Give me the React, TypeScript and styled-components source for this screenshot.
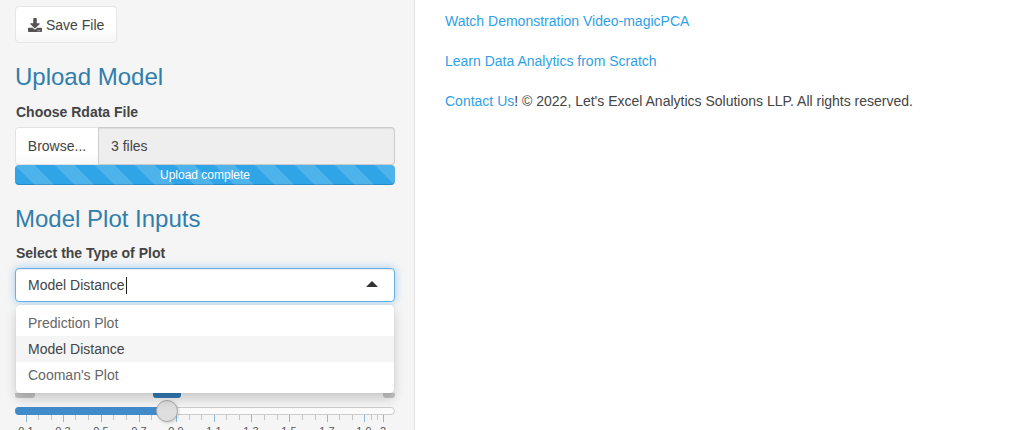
import styled, { createGlobalStyle } from 'styled-components';
import { FaDownload } from 'react-icons/fa';

const GlobalStyle = createGlobalStyle`
  html, body {
    margin: 0;
    height: 430px;
    overflow: hidden;
    background: #fff;
    font-family: "Liberation Sans", Arial, sans-serif;
    font-size: 14px;
    line-height: 20px;
    color: #444;
  }
  * { box-sizing: border-box; }
`;

const Page = styled.div`
  display: flex;
  height: 430px;
  overflow: hidden;
`;

const Sidebar = styled.aside`
  width: 415px;
  flex: none;
  padding: 6px 19px 0 15px;
  background: #f5f5f5;
  border-right: 1px solid #e3e3e3;
`;

const Main = styled.main`
  flex: 1;
  padding: 11px 30px 0;
`;

const Paragraph = styled.p`
  margin: 0 0 20px;
`;

const Link = styled.a`
  color: #2f9fe8;
  text-decoration: none;
`;

const SaveButton = styled.button`
  display: flex;
  align-items: center;
  gap: 4px;
  height: 37px;
  padding: 0 12px;
  font: inherit;
  color: #444;
  background: linear-gradient(to bottom, #fff 60%, #f6f6f6);
  border: 1px solid #e6e6e6;
  border-radius: 4px;
`;

const Heading = styled.h3<{ $bottom: number }>`
  margin: 21px 0 ${(p) => p.$bottom}px;
  font-size: 24px;
  font-weight: 400;
  line-height: 26px;
  color: #317eac;
`;

const Label = styled.label`
  display: block;
  margin-bottom: 5px;
  padding-left: 1px;
  font-weight: 700;
  color: #444;
`;

const FileRow = styled.div`
  display: flex;
  height: 38px;
`;

const BrowseButton = styled.span`
  width: 84px;
  display: flex;
  align-items: center;
  justify-content: center;
  background: linear-gradient(to bottom, #fff 70%, #f8f8f8);
  border: 1px solid #e3e3e3;
  border-right: 1px solid #ccc;
  border-radius: 4px 0 0 4px;
`;

const FileName = styled.span`
  flex: 1;
  display: flex;
  align-items: center;
  padding-left: 12px;
  background: #eee;
  border: 1px solid #ccc;
  border-left: 0;
  border-radius: 0 4px 4px 0;
  box-shadow: inset 0 1px 1px rgba(0, 0, 0, 0.075);
`;

const Progress = styled.div`
  height: 20px;
  font-size: 12px;
  line-height: 20px;
  text-align: center;
  color: #fff;
  border-radius: 4px;
  background-color: #2fa4e7;
  background-image: linear-gradient(
    45deg,
    rgba(255, 255, 255, 0.15) 25%,
    transparent 25%,
    transparent 50%,
    rgba(255, 255, 255, 0.15) 50%,
    rgba(255, 255, 255, 0.15) 75%,
    transparent 75%,
    transparent
  );
  background-size: 40px 40px;
  box-shadow: inset 0 -1px 0 rgba(0, 0, 0, 0.15);
`;

const SelectWrap = styled.div`
  position: relative;
`;

const SelectControl = styled.div`
  display: flex;
  align-items: center;
  justify-content: space-between;
  height: 34px;
  padding: 0 16px 0 12px;
  background: #fff;
  border: 1px solid #66afe9;
  border-radius: 4px;
  box-shadow: inset 0 1px 1px rgba(0, 0, 0, 0.075), 0 0 8px rgba(102, 175, 233, 0.6);
`;

const Caret = styled.span`
  width: 0;
  height: 0;
  margin-top: -2px;
  border-left: 6px solid transparent;
  border-right: 6px solid transparent;
  border-bottom: 6px solid #333;
`;

const TextCursor = styled.span`
  display: inline-block;
  width: 1px;
  height: 17px;
  margin-left: 1px;
  vertical-align: -4px;
  background: #222;
`;

const Dropdown = styled.div`
  position: absolute;
  z-index: 2;
  top: 37px;
  left: 1px;
  right: 1px;
  height: 88px;
  padding: 5px 0;
  background: #fff;
  border-radius: 4px;
  box-shadow: 0 6px 12px rgba(0, 0, 0, 0.175), 0 0 1px rgba(0, 0, 0, 0.2);
`;

const Option = styled.div<{ $active?: boolean }>`
  height: 26px;
  padding-left: 12px;
  line-height: 26px;
  color: ${(p) => (p.$active ? '#444' : '#666')};
  background: ${(p) => (p.$active ? '#f5f5f5' : 'transparent')};
`;

const SliderArea = styled.div`
  margin-top: 91px;
`;

const BadgeRow = styled.div`
  display: flex;
  height: 5px;
  margin-bottom: 9px;
`;

const Badge = styled.span<{ $gap: number; $width: number; $color: string }>`
  width: ${(p) => p.$width}px;
  margin-left: ${(p) => p.$gap}px;
  background: ${(p) => p.$color};
  border-radius: 0 0 3px 3px;
`;

const Track = styled.div`
  position: relative;
  height: 8px;
  background: #fbfbfb;
  border: 1px solid #ccc;
  border-radius: 4px;
`;

const Fill = styled.div`
  width: 152px;
  height: 8px;
  margin: -1px 0 0 -1px;
  background: #428bca;
  border-radius: 4px 0 0 4px;
`;

const Handle = styled.div`
  position: absolute;
  top: -8px;
  left: 140px;
  width: 22px;
  height: 22px;
  background: #dedede;
  border: 1px solid #aaa;
  border-radius: 50%;
  box-shadow: 1px 1px 3px rgba(0, 0, 0, 0.15);
`;

const Scale = styled.svg`
  display: block;
  font-size: 11px;
  fill: #555;
`;

const majorTicks = [
  { at: 11, label: '0.1' },
  { at: 48, label: '0.3' },
  { at: 86, label: '0.5' },
  { at: 124, label: '0.7' },
  { at: 161, label: '0.9' },
  { at: 199, label: '1.1' },
  { at: 236, label: '1.3' },
  { at: 274, label: '1.5' },
  { at: 312, label: '1.7' },
  { at: 349, label: '1.9' },
  { at: 368, label: '2' },
];

const minorTicks = [23, 36, 60, 73, 98, 111, 136, 149, 174, 186, 211, 224, 249, 262, 287, 300, 324, 337, 356, 362];

const App = () => (
  <Page>
    <GlobalStyle />
    <Sidebar>
      <SaveButton>
        <FaDownload size={14} color="#555" />
        Save File
      </SaveButton>
      <Heading $bottom={12}>Upload Model</Heading>
      <Label>Choose Rdata File</Label>
      <FileRow>
        <BrowseButton>Browse...</BrowseButton>
        <FileName>3 files</FileName>
      </FileRow>
      <Progress>Upload complete</Progress>
      <Heading $bottom={11}>Model Plot Inputs</Heading>
      <Label>Select the Type of Plot</Label>
      <SelectWrap>
        <SelectControl>
          <span>
            Model Distance
            <TextCursor />
          </span>
          <Caret />
        </SelectControl>
        <Dropdown>
          <Option>Prediction Plot</Option>
          <Option $active>Model Distance</Option>
          <Option>Cooman's Plot</Option>
        </Dropdown>
      </SelectWrap>
      <SliderArea>
        <BadgeRow>
          <Badge $gap={0} $width={20} $color="#c4c4c4" />
          <Badge $gap={118} $width={28} $color="#337ab7" />
          <Badge $gap={202} $width={12} $color="#c4c4c4" />
        </BadgeRow>
        <Track>
          <Fill />
          <Handle />
        </Track>
        <Scale width={380} height={30}>
          {minorTicks.map((at) => (
            <rect key={at} x={at} y={0} width={1} height={5} fill="#c4c4c4" />
          ))}
          {majorTicks.map((t) => (
            <rect key={t.at} x={t.at} y={0} width={1} height={7} fill="#8fb8d8" />
          ))}
          {majorTicks.map((t) => (
            <text key={t.at} x={t.at} y={20} textAnchor="middle">
              {t.label}
            </text>
          ))}
        </Scale>
      </SliderArea>
    </Sidebar>
    <Main>
      <Paragraph>
        <Link href="#">Watch Demonstration Video-magicPCA</Link>
      </Paragraph>
      <Paragraph>
        <Link href="#">Learn Data Analytics from Scratch</Link>
      </Paragraph>
      <Paragraph>
        <Link href="#">Contact Us</Link>! © 2022, Let's Excel Analytics Solutions LLP. All rights reserved.
      </Paragraph>
    </Main>
  </Page>
);

export default App;
